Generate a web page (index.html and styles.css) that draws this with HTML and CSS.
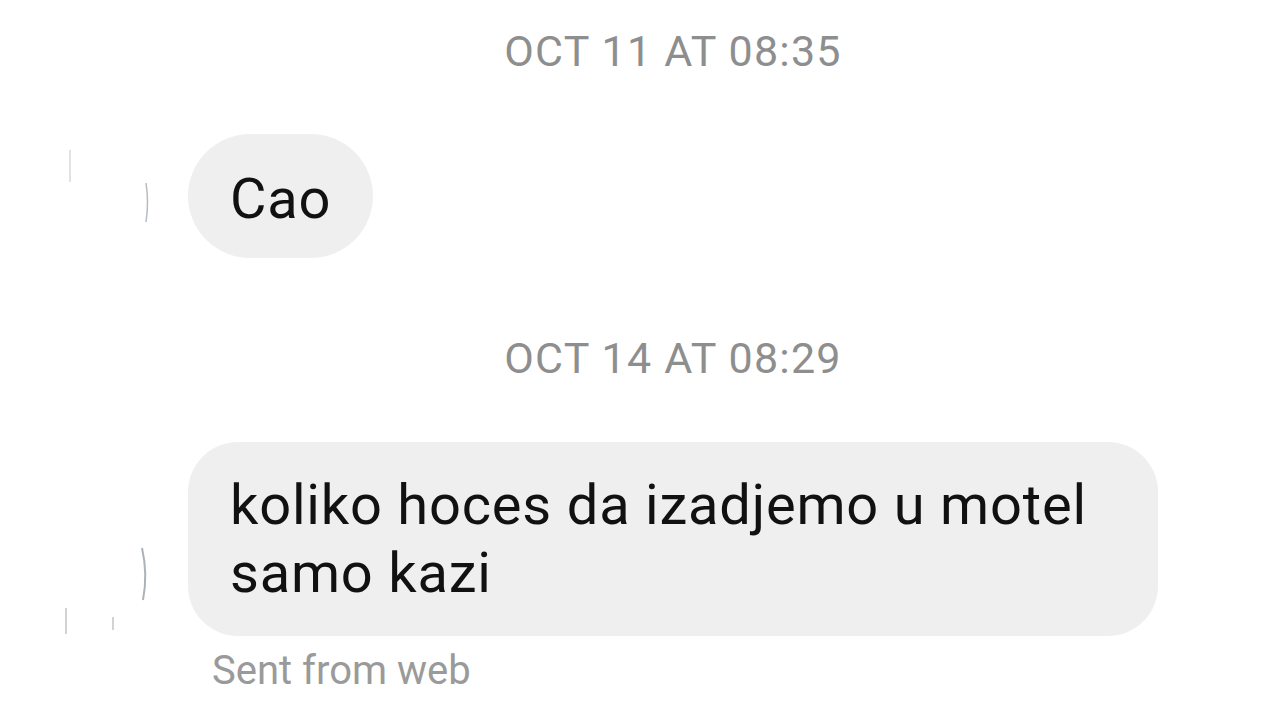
FILE: index.html
```html
<!DOCTYPE html>
<html lang="en">
<head>
    <meta charset="UTF-8">
    <meta name="viewport" content="width=device-width, initial-scale=1.0">
    <title>Messages</title>
    <link rel="stylesheet" href="styles.css">
</head>
<body>
    <div class="thread">
        <div class="stamp stamp-first">OCT 11 AT 08:35</div>

        <div class="row">
            <div class="avatar">
                <svg width="188" height="124" viewBox="0 0 188 124">
                    <line x1="70" y1="16" x2="70" y2="48" stroke="#e2e2e2" stroke-width="2"/>
                    <path d="M146 49 Q149 68 146 88" fill="none" stroke="#b5bcc2" stroke-width="1.5"/>
                </svg>
            </div>
            <div class="bubble bubble-short">Cao</div>
        </div>

        <div class="stamp">OCT 14 AT 08:29</div>

        <div class="row">
            <div class="avatar">
                <svg width="188" height="194" viewBox="0 0 188 194">
                    <path d="M142 106 Q148 132 143 158" fill="none" stroke="#aab3ba" stroke-width="2"/>
                    <line x1="66" y1="166" x2="66" y2="192" stroke="#c4c4c4" stroke-width="1.5"/>
                    <line x1="113" y1="175" x2="113" y2="188" stroke="#c4c4c4" stroke-width="1.5"/>
                </svg>
            </div>
            <div class="bubble">koliko hoces da izadjemo u motel samo kazi</div>
        </div>

        <div class="sent">Sent from web</div>
    </div>
</body>
</html>
```

FILE: styles.css
```css
body {
    margin: 0;
    background-color: #ffffff;
    font-family: Roboto, "Liberation Sans", sans-serif;
    color: #111111;
}

.thread {
    display: flex;
    flex-direction: column;
}

.stamp {
    padding-left: 66px;
    text-align: center;
    font-size: 43px;
    line-height: 48px;
    letter-spacing: 1.2px;
    color: #8e8e8e;
    margin: 76px 0 60px;
}

.stamp-first {
    margin-top: 27px;
    margin-bottom: 59px;
}

.row {
    display: flex;
    align-items: flex-start;
}

.avatar {
    width: 188px;
    flex-shrink: 0;
}

.avatar svg {
    display: block;
}

.bubble {
    box-sizing: border-box;
    max-width: 970px;
    padding: 29px 42px;
    background-color: #efefef;
    border-radius: 50px;
    font-size: 56px;
    line-height: 68px;
    letter-spacing: 0.8px;
}

.bubble-short {
    padding: 31px 42px 25px;
    border-radius: 62px;
}

.sent {
    margin: 13px 0 0 212px;
    font-size: 40px;
    line-height: 44px;
    color: #9a9a9a;
}
```
